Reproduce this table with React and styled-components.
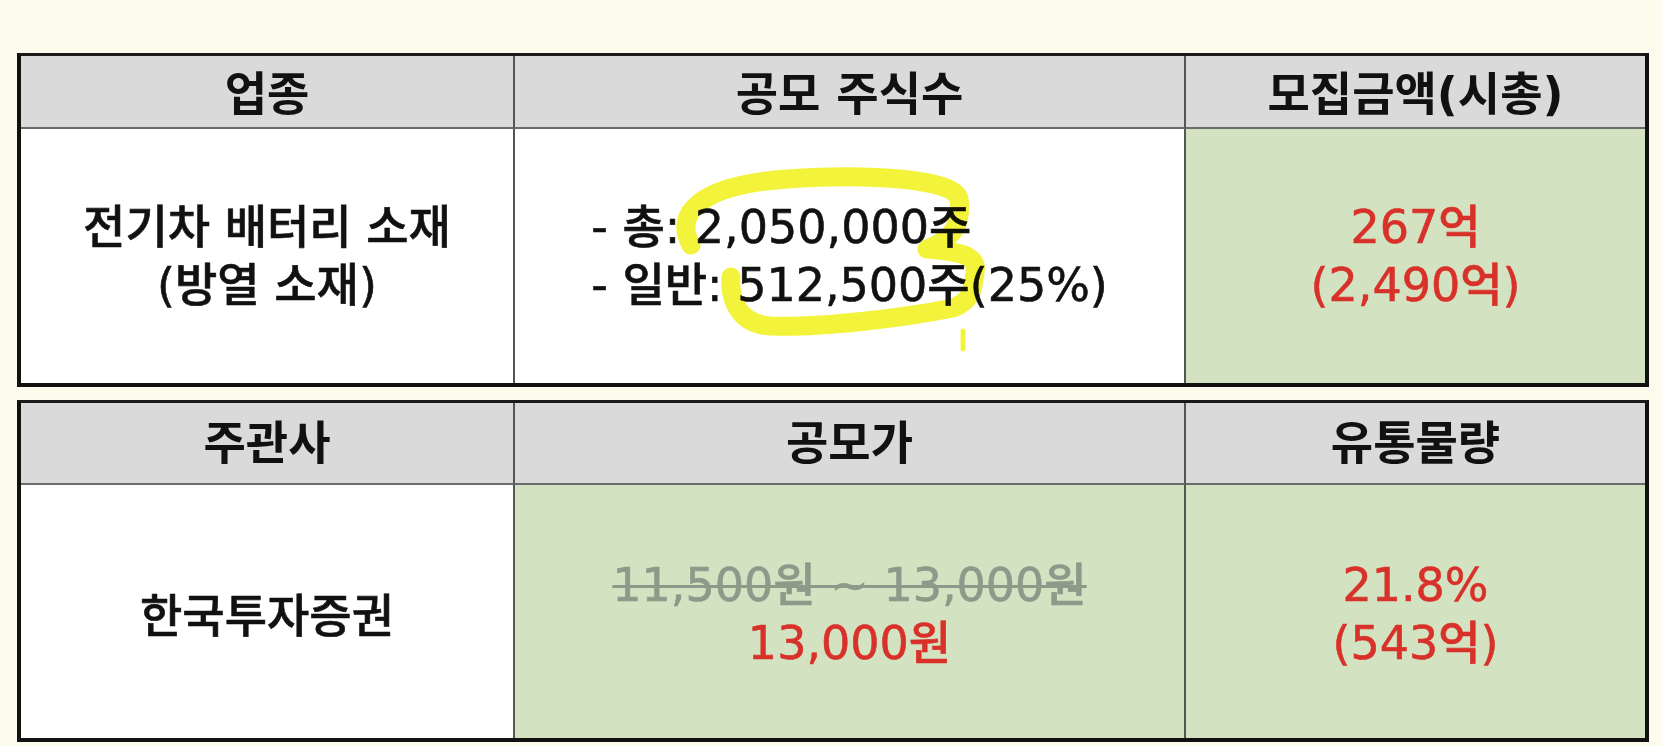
import React from "react";
import styled, { createGlobalStyle } from "styled-components";

const GlobalStyle = createGlobalStyle`
  html, body {
    margin: 0;
    padding: 0;
    background: #fdfaee;
  }
  body {
    font-family: "DejaVu Sans", "Noto Sans CJK KR", sans-serif;
  }
`;

const Page = styled.div`
  width: 1662px;
  height: 746px;
  box-sizing: border-box;
  padding: 53px 0 0 17px;
  display: flex;
  flex-direction: column;
  gap: 13px;
  overflow: hidden;
`;

const Table = styled.div`
  width: 1632px;
  box-sizing: border-box;
  display: grid;
  grid-template-columns: 494px 671px 1fr;
  grid-template-rows: ${(p) => p.$headH}px ${(p) => p.$bodyH}px;
  border-top: 3px solid #1a1a1a;
  border-left: 4px solid #111;
  border-right: 4px solid #111;
  border-bottom: 4px solid #111;
  background: #fff;
`;

const HeadCell = styled.div`
  background: #dadada;
  border-bottom: 2px solid #6a6a6a;
  border-right: ${(p) => (p.$last ? "none" : "2px solid #555")};
  display: flex;
  align-items: center;
  justify-content: center;
  font-size: 46px;
  font-weight: 700;
  color: #111;
  padding-bottom: ${(p) => p.$lift || 0}px;
  box-sizing: border-box;
`;

const BodyCell = styled.div`
  position: relative;
  background: ${(p) => (p.$green ? "#d3e3c2" : "#ffffff")};
  border-right: ${(p) => (p.$last ? "none" : "2px solid #555")};
  display: flex;
  flex-direction: column;
  align-items: center;
  justify-content: center;
  font-size: 46px;
  line-height: 58px;
  font-weight: 500;
  color: #111;
  -webkit-text-stroke: 0.6px currentColor;
  text-align: center;
  box-sizing: border-box;
  padding-top: ${(p) => p.$drop || 0}px;
`;

const Lines = styled.div`
  text-align: left;
  position: relative;
  z-index: 0;
`;

const Red = styled.div`
  color: #d8312a;
`;

const Struck = styled.div`
  color: #8c9a8a;
  text-decoration: line-through;
  text-decoration-thickness: 3px;
  text-decoration-color: #8c9a8a;
`;

const Highlight = styled.svg`
  position: absolute;
  left: 0;
  top: 0;
  width: 671px;
  height: 254px;
  mix-blend-mode: multiply;
  pointer-events: none;
  z-index: 1;
`;

export default function App() {
  return (
    <>
      <GlobalStyle />
      <Page>
        <Table $headH={73} $bodyH={254}>
          <HeadCell $lift={4}>업종</HeadCell>
          <HeadCell $lift={4}>공모 주식수</HeadCell>
          <HeadCell $lift={4} $last>
            모집금액(시총)
          </HeadCell>

          <BodyCell>
            <div>전기차 배터리 소재</div>
            <div>(방열 소재)</div>
          </BodyCell>
          <BodyCell>
            <Lines>
              <div>- 총: 2,050,000주</div>
              <div>- 일반: 512,500주(25%)</div>
            </Lines>
            <Highlight viewBox="0 0 671 254">
              <path
                d="M176,116 C158,84 186,56 272,50 C355,44 440,50 444,70 C447,92 440,110 412,120 C436,122 464,124 460,143 C458,162 456,172 438,179 C388,189 305,199 255,197 C225,195 214,172 216,148"
                fill="none"
                stroke="#f3f33c"
                strokeWidth="19"
                strokeLinecap="round"
                strokeLinejoin="round"
              />
              <path
                d="M448,202 L448,220"
                fill="none"
                stroke="#f3f33c"
                strokeWidth="5"
                strokeLinecap="round"
              />
            </Highlight>
          </BodyCell>
          <BodyCell $green $last>
            <Red>267억</Red>
            <Red>(2,490억)</Red>
          </BodyCell>
        </Table>

        <Table $headH={82} $bodyH={253}>
          <HeadCell $lift={8}>주관사</HeadCell>
          <HeadCell $lift={8}>공모가</HeadCell>
          <HeadCell $lift={8} $last>
            유통물량
          </HeadCell>

          <BodyCell $drop={8}>
            <div>한국투자증권</div>
          </BodyCell>
          <BodyCell $green $drop={4}>
            <Struck>11,500원 ~ 13,000원</Struck>
            <Red>13,000원</Red>
          </BodyCell>
          <BodyCell $green $last $drop={4}>
            <Red>21.8%</Red>
            <Red>(543억)</Red>
          </BodyCell>
        </Table>
      </Page>
    </>
  );
}
